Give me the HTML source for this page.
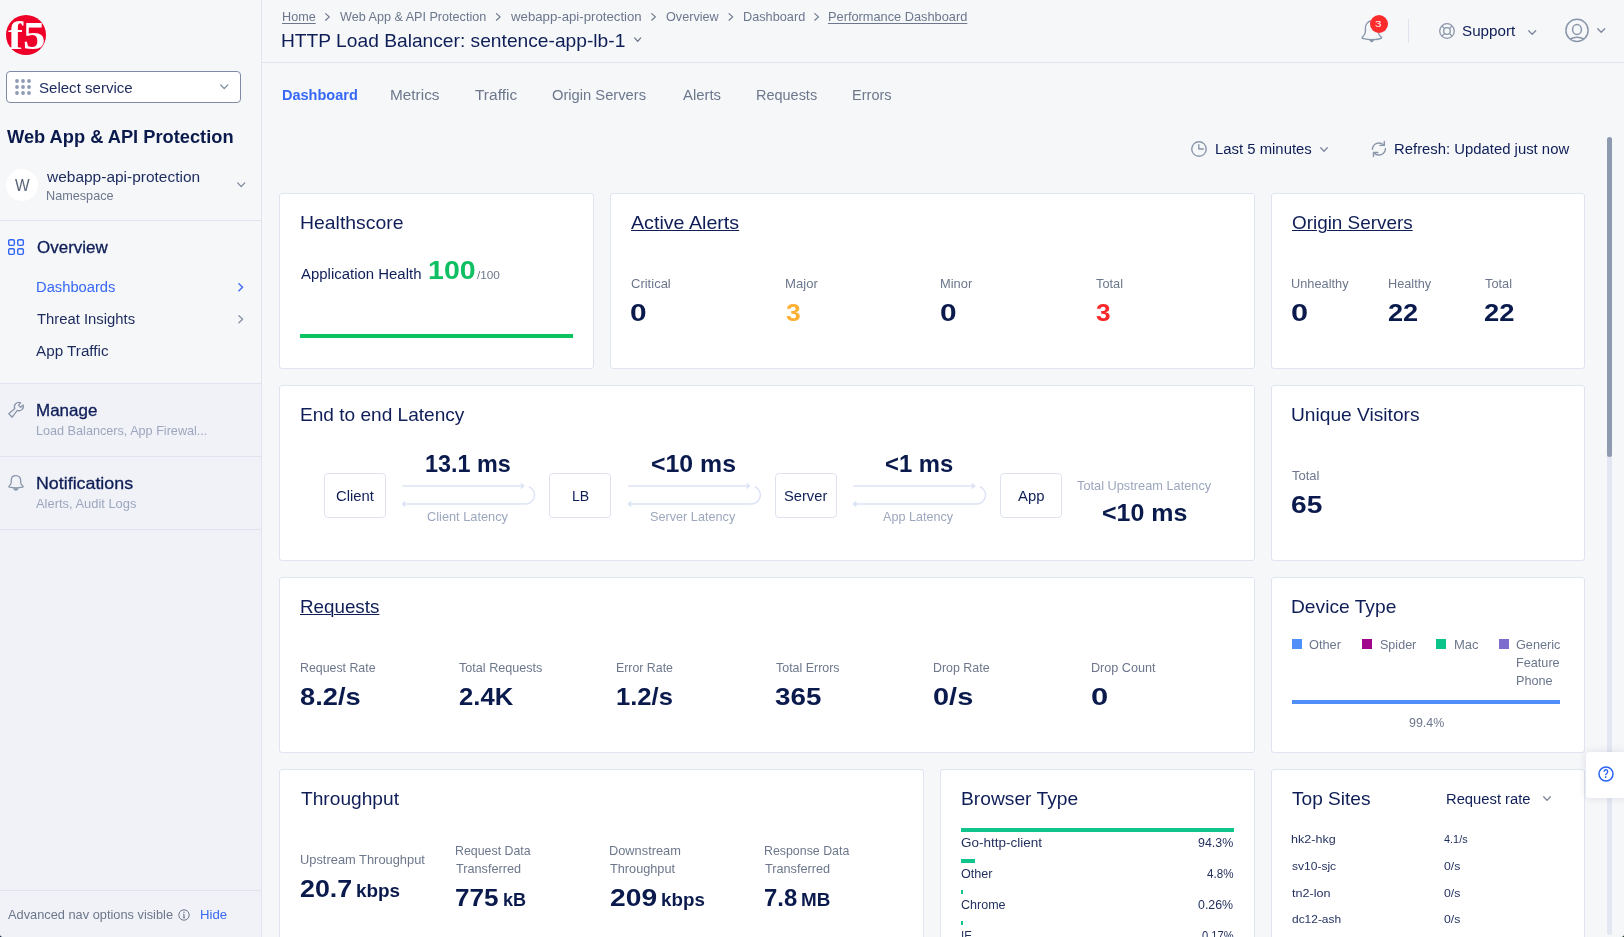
<!DOCTYPE html>
<html lang="en">
<head>
<meta charset="utf-8">
<title>HTTP Load Balancer: sentence-app-lb-1 - Performance Dashboard</title>
<style>
*{box-sizing:border-box;margin:0;padding:0}
html,body{width:1624px;height:937px;overflow:hidden;background:#f5f7f9}
body{position:relative;font-family:"Liberation Sans",sans-serif;color:#0f1e57}
.abs{position:absolute}
.t{position:absolute;white-space:nowrap;line-height:20px;display:block}
.card{position:absolute;background:#fff;border:1px solid #e0e4f0;border-radius:3px}
.hl{position:absolute;height:1px;background:#e0e4f0}
.vl{position:absolute;width:1px;background:#e0e4f0}
.nbox{position:absolute;width:62px;height:45px;top:473px;border:1px solid #dfe3f0;border-radius:4px;background:#fff}
svg{position:absolute;overflow:visible}
.bar{position:absolute;height:4px}
.sq{position:absolute;width:10px;height:10px;top:639px}
</style>
</head>
<body>
<!-- ===== sidebar ===== -->
<div class="abs" id="sb-low" style="left:0;top:384px;width:261px;height:553px;background:#f0f2f7"></div>
<div class="vl" style="left:261px;top:0;height:937px"></div>
<div class="hl" style="left:0;top:220px;width:261px"></div>
<div class="hl" style="left:0;top:383px;width:261px"></div>
<div class="hl" style="left:0;top:456px;width:261px"></div>
<div class="hl" style="left:0;top:529px;width:261px"></div>
<div class="hl" style="left:0;top:890px;width:261px"></div>
<!-- logo -->
<div class="abs" id="logo" style="left:6px;top:15px;width:40px;height:40px;border-radius:50%;background:#ee0028"></div>
<!-- select service -->
<div class="abs" style="left:6px;top:71px;width:235px;height:32px;border:1px solid #7f8ba6;border-radius:4px;background:#fff"></div>
<svg style="left:15px;top:79px" width="16" height="16" viewBox="0 0 16 16" fill="#8f9bb3"><circle cx="2" cy="2" r="1.9"/><circle cx="8" cy="2" r="1.9"/><circle cx="14" cy="2" r="1.9"/><circle cx="2" cy="8" r="1.9"/><circle cx="8" cy="8" r="1.9"/><circle cx="14" cy="8" r="1.9"/><circle cx="2" cy="14" r="1.9"/><circle cx="8" cy="14" r="1.9"/><circle cx="14" cy="14" r="1.9"/></svg>
<svg style="left:220px;top:84px" width="9" height="6" viewBox="0 0 9 6" fill="none" stroke="#7d879c" stroke-width="1.3" stroke-linecap="round" stroke-linejoin="round"><path d="M0.7 0.9 L4.2 4.6 L7.7 0.9"/></svg>
<!-- namespace -->
<div class="abs" style="left:6px;top:169px;width:32px;height:32px;border-radius:50%;background:#fff"></div>
<svg style="left:237px;top:182px" width="9" height="6" viewBox="0 0 9 6" fill="none" stroke="#7d879c" stroke-width="1.3" stroke-linecap="round" stroke-linejoin="round"><path d="M0.7 0.9 L4.2 4.6 L7.7 0.9"/></svg>
<!-- overview icon -->
<svg style="left:8px;top:239px" width="16" height="16" viewBox="0 0 16 16" fill="none" stroke="#3064f5" stroke-width="1.4"><rect x="0.7" y="0.7" width="5.65" height="5.65" rx="1.4"/><rect x="9.7" y="0.7" width="5.65" height="5.65" rx="1.4"/><rect x="0.7" y="9.7" width="5.65" height="5.65" rx="1.4"/><rect x="9.7" y="9.7" width="5.65" height="5.65" rx="1.4"/></svg>
<!-- chevrons right -->
<svg style="left:238px;top:283px" width="6" height="9" viewBox="0 0 6 9" fill="none" stroke="#3e6df5" stroke-width="1.4" stroke-linecap="round" stroke-linejoin="round"><path d="M0.9 0.8 L4.6 4.3 L0.9 7.8"/></svg>
<svg style="left:238px;top:315px" width="6" height="9" viewBox="0 0 6 9" fill="none" stroke="#8690a6" stroke-width="1.3" stroke-linecap="round" stroke-linejoin="round"><path d="M0.9 0.8 L4.6 4.3 L0.9 7.8"/></svg>
<!-- wrench -->
<svg style="left:8px;top:402px" width="16" height="16" viewBox="0 0 16 16" fill="none" stroke="#8a96aa" stroke-width="1.3" stroke-linejoin="round"><path d="M6.8 6.6 A4.3 4.3 0 0 1 12.6 0.9 L10.6 3.4 L12.6 5.4 L15.1 3.0 A4.3 4.3 0 0 1 9.2 8.3 L4.2 15.2 L0.8 11.8 Z"/></svg>
<!-- bell (sidebar) -->
<svg style="left:8px;top:475px" width="16" height="16" viewBox="0 0 16 16" fill="none" stroke="#8a96aa" stroke-width="1.3" stroke-linejoin="round"><path d="M7.9 0.65 C5.0 0.65 3.25 2.8 3.25 5.4 L3.25 7.6 C3.25 9.3 2.2 10.1 1.0 11.3 C0.6 11.7 0.8 12.0 1.4 12.1 C5.5 13.1 10.3 13.1 14.6 12.1 C15.2 12.0 15.4 11.7 15.0 11.3 C13.8 10.1 12.65 9.3 12.65 7.6 L12.65 5.4 C12.65 2.8 10.9 0.65 7.9 0.65 Z"/><path d="M5.0 13.3 L10.8 13.3 C10.3 14.9 9.3 15.8 7.9 15.8 C6.5 15.8 5.5 14.9 5.0 13.3 Z" fill="#8a96aa" stroke="none"/></svg>
<!-- info icon -->
<svg style="left:177.5px;top:908.8px" width="12" height="12" viewBox="0 0 12 12" fill="none" stroke="#6c778c" stroke-width="1"><circle cx="6" cy="6" r="5.2"/><path d="M6 5.2 L6 8.8 M4.9 8.8 L7.1 8.8 M5.1 5.2 L6 5.2" stroke-width="1.1"/><circle cx="6" cy="3.3" r="0.7" fill="#6c778c" stroke="none"/></svg>

<!-- ===== header ===== -->
<div class="hl" style="left:262px;top:62px;width:1362px"></div>
<!-- breadcrumb chevrons -->
<svg id="bcchev" style="left:0;top:0" width="1000" height="30" viewBox="0 0 1000 30" fill="none" stroke="#6c778c" stroke-width="1.2" stroke-linecap="round" stroke-linejoin="round">
<path d="M325.6 13.6 L329.3 16.9 L325.6 20.2"/>
<path d="M496.4 13.6 L500.1 16.9 L496.4 20.2"/>
<path d="M651.7 13.6 L655.4 16.9 L651.7 20.2"/>
<path d="M729 13.6 L732.7 16.9 L729 20.2"/>
<path d="M814.8 13.6 L818.5 16.9 L814.8 20.2"/>
</svg>
<!-- title chevron -->
<svg style="left:634px;top:37px" width="9" height="6" viewBox="0 0 9 6" fill="none" stroke="#6c778c" stroke-width="1.3" stroke-linecap="round" stroke-linejoin="round"><path d="M0.7 0.9 L3.7 4.4 L6.7 0.9"/></svg>
<!-- header bell -->
<svg style="left:1360.5px;top:20px" width="21.7" height="25.35" viewBox="0 0 16 16.6" preserveAspectRatio="none" fill="none" stroke="#8a96aa" stroke-width="1.35" stroke-linejoin="round"><path vector-effect="non-scaling-stroke" d="M7.9 0.65 C5.0 0.65 3.25 2.8 3.25 5.4 L3.25 7.6 C3.25 9.3 2.2 10.1 1.0 11.3 C0.6 11.7 0.8 12.0 1.4 12.1 C5.5 13.1 10.3 13.1 14.6 12.1 C15.2 12.0 15.4 11.7 15.0 11.3 C13.8 10.1 12.65 9.3 12.65 7.6 L12.65 5.4 C12.65 2.8 10.9 0.65 7.9 0.65 Z"/><path d="M6.1 13.0 L9.7 13.0 C9.4 14.1 8.8 14.6 7.9 14.6 C7.0 14.6 6.4 14.1 6.1 13.0 Z" fill="#8a96aa" stroke="none"/></svg>
<div class="abs" style="left:1369.8px;top:14.9px;width:18.2px;height:18.2px;border-radius:50%;background:#fd2c2c"></div>
<div class="vl" style="left:1408px;top:19px;height:24px;background:#dfe3ee"></div>
<!-- support icon -->
<svg style="left:1438.8px;top:22.9px" width="16" height="16" viewBox="0 0 16 16" fill="none" stroke="#8a96aa" stroke-width="1.3"><circle cx="8" cy="8" r="7.3"/><circle cx="8" cy="8" r="3.3"/><path d="M2.9 2.9 L5.6 5.6 M13.1 2.9 L10.4 5.6 M2.9 13.1 L5.6 10.4 M13.1 13.1 L10.4 10.4"/></svg>
<svg style="left:1528px;top:30px" width="9" height="6" viewBox="0 0 9 6" fill="none" stroke="#7d879c" stroke-width="1.3" stroke-linecap="round" stroke-linejoin="round"><path d="M0.7 0.7 L4.2 4.2 L7.7 0.7"/></svg>
<!-- user icon -->
<svg style="left:1565px;top:18px" width="24" height="25" viewBox="0 0 24 25" fill="none" stroke="#8a96aa" stroke-width="1.45"><circle cx="12" cy="12.4" r="11.1"/><ellipse cx="12" cy="11.5" rx="4.4" ry="5.0"/><path d="M5.0 21.0 Q12 17.3 19.0 21.0"/></svg>
<svg style="left:1597px;top:28px" width="9" height="6" viewBox="0 0 9 6" fill="none" stroke="#7d879c" stroke-width="1.3" stroke-linecap="round" stroke-linejoin="round"><path d="M0.7 0.7 L4.2 4.2 L7.7 0.7"/></svg>
<!-- clock -->
<svg style="left:1190.9px;top:140.85px" width="16" height="16" viewBox="0 0 16 16" fill="none" stroke="#8a96aa" stroke-width="1.4" stroke-linecap="round" stroke-linejoin="round"><circle cx="8" cy="8" r="7.25"/><path d="M7.8 3.6 L7.8 8.05 L12.4 8.05"/></svg>
<svg style="left:1320px;top:147px" width="9" height="6" viewBox="0 0 9 6" fill="none" stroke="#7d879c" stroke-width="1.3" stroke-linecap="round" stroke-linejoin="round"><path d="M0.7 0.7 L4.0 4.2 L7.3 0.7"/></svg>
<!-- refresh -->
<svg style="left:1371px;top:141px" width="16" height="16" viewBox="0 0 16 16" fill="none" stroke="#8a96aa" stroke-width="1.4" stroke-linecap="round" stroke-linejoin="round"><path d="M1.4 8.3 A6.6 6.6 0 0 1 12.9 4.2"/><path d="M13.3 0.5 L13.3 4.4 L8.9 4.4"/><path d="M14.4 7.7 A6.6 6.6 0 0 1 2.9 11.8"/><path d="M2.5 15.5 L2.5 11.5 L6.8 11.5"/></svg>
<!-- scrollbar -->
<div class="abs" style="left:1607px;top:137px;width:5px;height:798px;border-radius:2.5px;background:#e3e7f2"></div>
<div class="abs" style="left:1607px;top:137px;width:5px;height:320px;border-radius:2.5px;background:#8e9ab0"></div>

<!-- ===== cards ===== -->
<div class="card" style="left:279px;top:193px;width:315px;height:176px"></div>
<div class="card" style="left:610px;top:193px;width:645px;height:176px"></div>
<div class="card" style="left:1271px;top:193px;width:314px;height:176px"></div>
<div class="card" style="left:279px;top:385px;width:976px;height:176px"></div>
<div class="card" style="left:1271px;top:385px;width:314px;height:176px"></div>
<div class="card" style="left:279px;top:577px;width:976px;height:176px"></div>
<div class="card" style="left:1271px;top:577px;width:314px;height:176px"></div>
<div class="card" style="left:279px;top:769px;width:645px;height:200px"></div>
<div class="card" style="left:940px;top:769px;width:315px;height:200px"></div>
<div class="card" style="left:1271px;top:769px;width:314px;height:200px"></div>
<!-- health bar -->
<div class="bar" style="left:300px;top:334px;width:273px;background:#0cc45f"></div>
<!-- latency boxes -->
<div class="nbox" style="left:324px"></div>
<div class="nbox" style="left:549px"></div>
<div class="nbox" style="left:775px"></div>
<div class="nbox" style="left:1000px"></div>
<svg id="arrows" style="left:0;top:0" width="1100" height="560" viewBox="0 0 1100 560" fill="none" stroke="#dde4f6" stroke-width="1.5">
<g id="ar1"><path d="M402.4 486 L521 486"/><path d="M520.8 482.6 L524.8 486 L520.8 489.4 Z" fill="#dde4f6" stroke="none"/><path d="M529 486.7 A9 9 0 0 1 525.7 504 L405 504"/><path d="M405.4 500.6 L401.4 504 L405.4 507.4 Z" fill="#dde4f6" stroke="none"/></g>
<g transform="translate(225.8 0)"><path d="M402.4 486 L521 486"/><path d="M520.8 482.6 L524.8 486 L520.8 489.4 Z" fill="#dde4f6" stroke="none"/><path d="M529 486.7 A9 9 0 0 1 525.7 504 L405 504"/><path d="M405.4 500.6 L401.4 504 L405.4 507.4 Z" fill="#dde4f6" stroke="none"/></g>
<g transform="translate(451 0)"><path d="M402.4 486 L521 486"/><path d="M520.8 482.6 L524.8 486 L520.8 489.4 Z" fill="#dde4f6" stroke="none"/><path d="M529 486.7 A9 9 0 0 1 525.7 504 L405 504"/><path d="M405.4 500.6 L401.4 504 L405.4 507.4 Z" fill="#dde4f6" stroke="none"/></g>
</svg>
<!-- device type -->
<div class="sq" style="left:1292px;background:#4f8ff7"></div>
<div class="sq" style="left:1362px;background:#a0058c"></div>
<div class="sq" style="left:1436px;background:#0ac48a"></div>
<div class="sq" style="left:1499px;background:#7c6cce"></div>
<div class="bar" style="left:1292px;top:700px;width:268px;background:#4f8ff7"></div>
<!-- browser bars -->
<div class="bar" style="left:961px;top:828px;width:273px;background:#10c48c"></div>
<div class="bar" style="left:961px;top:859px;width:14px;background:#10c48c"></div>
<div class="bar" style="left:961px;top:890px;width:2px;background:#10c48c"></div>
<div class="bar" style="left:961px;top:921px;width:2px;background:#10c48c"></div>
<!-- top sites chevron -->
<svg style="left:1543px;top:796px" width="9" height="6" viewBox="0 0 9 6" fill="none" stroke="#7d879c" stroke-width="1.3" stroke-linecap="round" stroke-linejoin="round"><path d="M0.7 0.7 L4.0 4.4 L7.3 0.7"/></svg>
<!-- help button -->
<div class="abs" style="left:1586px;top:752px;width:40px;height:46px;background:#fff;border-radius:4px 0 0 4px;box-shadow:0 0 8px rgba(30,40,90,0.12)"></div>
<svg style="left:1598px;top:766px" width="16" height="16" viewBox="0 0 16 16" fill="none" stroke="#2a63f6" stroke-width="1.5"><circle cx="8" cy="8" r="7"/></svg>
<svg style="left:0;top:0" width="1624" height="937" viewBox="0 0 1624 937"><path d="M0 937 L0 934.3 A2.7 2.7 0 0 0 2.7 937 Z" fill="#0a1a38"/><path d="M1624 937 L1624 934.3 A2.7 2.7 0 0 1 1621.3 937 Z" fill="#0a200f"/></svg>
<div id="txt" style="position:absolute;left:0;top:0;width:1624px;height:937px;will-change:transform">
<span class="t" style="left:8.0px;top:26px;font-size:40.0px;font-weight:700;color:#ffffff;transform:scaleX(1.1257);transform-origin:0 0;font-family:'Liberation Serif',serif">f5</span>
<span class="t" style="left:1603.0px;top:764px;font-size:12.5px;font-weight:700;color:#2a63f6;transform:scaleX(0.7612);transform-origin:0 0;">?</span>
<span class="t" style="left:39.0px;top:78px;font-size:14.42px;font-weight:400;color:#1c2a5c;transform:scaleX(1.0447);transform-origin:0 0;">Select service</span>
<span class="t" style="left:7.0px;top:127px;font-size:18.0px;font-weight:700;color:#0a1a4c;transform:scaleX(1.0143);transform-origin:0 0;">Web App &amp; API Protection</span>
<span class="t" style="left:15.0px;top:175px;font-size:16.48px;font-weight:400;color:#5a6478;transform:scaleX(0.9401);transform-origin:0 0;">W</span>
<span class="t" style="left:47.0px;top:167px;font-size:14.42px;font-weight:400;color:#1c2a5c;transform:scaleX(1.0746);transform-origin:0 0;">webapp-api-protection</span>
<span class="t" style="left:46.0px;top:186px;font-size:12.36px;font-weight:400;color:#6c778c;transform:scaleX(1.0242);transform-origin:0 0;">Namespace</span>
<span class="t" style="left:37.0px;top:237px;font-size:16.48px;font-weight:400;color:#0f1e57;-webkit-text-stroke:0.3px currentColor;transform:scaleX(1.0314);transform-origin:0 0;">Overview</span>
<span class="t" style="left:36.0px;top:277px;font-size:14.42px;font-weight:400;color:#3668f5;transform:scaleX(1.0225);transform-origin:0 0;">Dashboards</span>
<span class="t" style="left:37.0px;top:309px;font-size:14.42px;font-weight:400;color:#1c2a5c;transform:scaleX(1.0297);transform-origin:0 0;">Threat Insights</span>
<span class="t" style="left:36.0px;top:341px;font-size:14.42px;font-weight:400;color:#1c2a5c;transform:scaleX(1.0579);transform-origin:0 0;">App Traffic</span>
<span class="t" style="left:36.0px;top:400px;font-size:16.48px;font-weight:400;color:#0f1e57;-webkit-text-stroke:0.3px currentColor;transform:scaleX(1.0307);transform-origin:0 0;">Manage</span>
<span class="t" style="left:36.0px;top:421px;font-size:12.36px;font-weight:400;color:#9ca7be;transform:scaleX(1.0224);transform-origin:0 0;">Load Balancers, App Firewal...</span>
<span class="t" style="left:36.0px;top:473px;font-size:16.48px;font-weight:400;color:#0f1e57;-webkit-text-stroke:0.3px currentColor;transform:scaleX(1.0818);transform-origin:0 0;">Notifications</span>
<span class="t" style="left:36.0px;top:494px;font-size:12.36px;font-weight:400;color:#9ca7be;transform:scaleX(1.0438);transform-origin:0 0;">Alerts, Audit Logs</span>
<span class="t" style="left:8.0px;top:905px;font-size:12.36px;font-weight:400;color:#6c778c;transform:scaleX(1.0354);transform-origin:0 0;">Advanced nav options visible</span>
<span class="t" style="left:200.0px;top:905px;font-size:12.36px;font-weight:400;color:#3668f5;transform:scaleX(1.0624);transform-origin:0 0;">Hide</span>
<span class="t" style="left:282.0px;top:7px;font-size:12.36px;font-weight:400;color:#6c778c;transform:scaleX(1.0228);transform-origin:0 0;text-decoration:underline;text-underline-offset:2px">Home</span>
<span class="t" style="left:340.0px;top:7px;font-size:12.36px;font-weight:400;color:#6c778c;transform:scaleX(1.0199);transform-origin:0 0;">Web App &amp; API Protection</span>
<span class="t" style="left:511.0px;top:7px;font-size:12.36px;font-weight:400;color:#6c778c;transform:scaleX(1.0685);transform-origin:0 0;">webapp-api-protection</span>
<span class="t" style="left:666.0px;top:7px;font-size:12.36px;font-weight:400;color:#6c778c;transform:scaleX(1.0224);transform-origin:0 0;">Overview</span>
<span class="t" style="left:743.0px;top:7px;font-size:12.36px;font-weight:400;color:#6c778c;transform:scaleX(1.0292);transform-origin:0 0;">Dashboard</span>
<span class="t" style="left:828.0px;top:7px;font-size:12.36px;font-weight:400;color:#6c778c;transform:scaleX(1.0347);transform-origin:0 0;text-decoration:underline;text-underline-offset:2px">Performance Dashboard</span>
<span class="t" style="left:281.0px;top:31px;font-size:18.54px;font-weight:400;color:#0f1e57;transform:scaleX(1.0360);transform-origin:0 0;">HTTP Load Balancer: sentence-app-lb-1</span>
<span class="t" style="left:282.0px;top:85px;font-size:14.0px;font-weight:700;color:#3668f5;transform:scaleX(1.0363);transform-origin:0 0;">Dashboard</span>
<span class="t" style="left:390.0px;top:85px;font-size:14.42px;font-weight:400;color:#6c778c;transform:scaleX(1.0660);transform-origin:0 0;">Metrics</span>
<span class="t" style="left:475.0px;top:85px;font-size:14.42px;font-weight:400;color:#6c778c;transform:scaleX(1.0737);transform-origin:0 0;">Traffic</span>
<span class="t" style="left:552.0px;top:85px;font-size:14.42px;font-weight:400;color:#6c778c;transform:scaleX(1.0218);transform-origin:0 0;">Origin Servers</span>
<span class="t" style="left:683.0px;top:85px;font-size:14.42px;font-weight:400;color:#6c778c;transform:scaleX(1.0322);transform-origin:0 0;">Alerts</span>
<span class="t" style="left:756.0px;top:85px;font-size:14.42px;font-weight:400;color:#6c778c;transform:scaleX(1.0041);transform-origin:0 0;">Requests</span>
<span class="t" style="left:852.0px;top:85px;font-size:14.42px;font-weight:400;color:#6c778c;transform:scaleX(1.0091);transform-origin:0 0;">Errors</span>
<span class="t" style="left:1375.0px;top:14px;font-size:9.79px;font-weight:400;color:#ffffff;transform:scaleX(1.1751);transform-origin:0 0;">3</span>
<span class="t" style="left:1462.0px;top:21px;font-size:14.42px;font-weight:400;color:#0f1e57;transform:scaleX(1.0559);transform-origin:0 0;">Support</span>
<span class="t" style="left:1215.0px;top:139px;font-size:14.42px;font-weight:400;color:#0f1e57;transform:scaleX(1.0326);transform-origin:0 0;">Last 5 minutes</span>
<span class="t" style="left:1394.0px;top:139px;font-size:14.42px;font-weight:400;color:#0f1e57;transform:scaleX(1.0316);transform-origin:0 0;">Refresh: Updated just now</span>
<span class="t" style="left:300.0px;top:213px;font-size:18.54px;font-weight:400;color:#0f1e57;transform:scaleX(1.0471);transform-origin:0 0;">Healthscore</span>
<span class="t" style="left:301.0px;top:264px;font-size:14.42px;font-weight:400;color:#0f1e57;transform:scaleX(1.0372);transform-origin:0 0;">Application Health</span>
<span class="t" style="left:428.0px;top:260px;font-size:25.0px;font-weight:700;color:#0fbf61;transform:scaleX(1.1418);transform-origin:0 0;">100</span>
<span class="t" style="left:477.0px;top:265px;font-size:11.33px;font-weight:400;color:#6c778c;transform:scaleX(1.0392);transform-origin:0 0;">/100</span>
<span class="t" style="left:631.0px;top:213px;font-size:18.54px;font-weight:400;color:#0f1e57;transform:scaleX(1.0609);transform-origin:0 0;text-decoration:underline;text-underline-offset:1px;text-decoration-thickness:1px">Active Alerts</span>
<span class="t" style="left:631.0px;top:274px;font-size:12.36px;font-weight:400;color:#6c778c;transform:scaleX(1.0528);transform-origin:0 0;">Critical</span>
<span class="t" style="left:630.0px;top:303px;font-size:24.0px;font-weight:700;color:#0a1a4c;transform:scaleX(1.2441);transform-origin:0 0;">0</span>
<span class="t" style="left:785.0px;top:274px;font-size:12.36px;font-weight:400;color:#6c778c;transform:scaleX(1.0608);transform-origin:0 0;">Major</span>
<span class="t" style="left:786.0px;top:303px;font-size:24.0px;font-weight:700;color:#fbb034;transform:scaleX(1.1048);transform-origin:0 0;">3</span>
<span class="t" style="left:940.0px;top:274px;font-size:12.36px;font-weight:400;color:#6c778c;transform:scaleX(1.0407);transform-origin:0 0;">Minor</span>
<span class="t" style="left:940.0px;top:303px;font-size:24.0px;font-weight:700;color:#0a1a4c;transform:scaleX(1.2420);transform-origin:0 0;">0</span>
<span class="t" style="left:1096.0px;top:274px;font-size:12.36px;font-weight:400;color:#6c778c;transform:scaleX(1.0331);transform-origin:0 0;">Total</span>
<span class="t" style="left:1096.0px;top:303px;font-size:24.0px;font-weight:700;color:#f9282b;transform:scaleX(1.0941);transform-origin:0 0;">3</span>
<span class="t" style="left:1292.0px;top:213px;font-size:18.54px;font-weight:400;color:#0f1e57;transform:scaleX(1.0189);transform-origin:0 0;text-decoration:underline;text-underline-offset:1px;text-decoration-thickness:1px">Origin Servers</span>
<span class="t" style="left:1291.0px;top:274px;font-size:12.36px;font-weight:400;color:#6c778c;transform:scaleX(1.0339);transform-origin:0 0;">Unhealthy</span>
<span class="t" style="left:1291.0px;top:303px;font-size:24.0px;font-weight:700;color:#0a1a4c;transform:scaleX(1.2798);transform-origin:0 0;">0</span>
<span class="t" style="left:1388.0px;top:274px;font-size:12.36px;font-weight:400;color:#6c778c;transform:scaleX(1.0299);transform-origin:0 0;">Healthy</span>
<span class="t" style="left:1388.0px;top:303px;font-size:24.0px;font-weight:700;color:#0a1a4c;transform:scaleX(1.1296);transform-origin:0 0;">22</span>
<span class="t" style="left:1485.0px;top:274px;font-size:12.36px;font-weight:400;color:#6c778c;transform:scaleX(1.0331);transform-origin:0 0;">Total</span>
<span class="t" style="left:1484.0px;top:303px;font-size:24.0px;font-weight:700;color:#0a1a4c;transform:scaleX(1.1399);transform-origin:0 0;">22</span>
<span class="t" style="left:300.0px;top:405px;font-size:18.54px;font-weight:400;color:#0f1e57;transform:scaleX(1.0293);transform-origin:0 0;">End to end Latency</span>
<span class="t" style="left:336.0px;top:486px;font-size:14.42px;font-weight:400;color:#0f1e57;transform:scaleX(1.0301);transform-origin:0 0;">Client</span>
<span class="t" style="left:425.0px;top:454px;font-size:24.0px;font-weight:700;color:#0a1a4c;transform:scaleX(0.9734);transform-origin:0 0;">13.1 ms</span>
<span class="t" style="left:427.0px;top:507px;font-size:12.36px;font-weight:400;color:#9ca7be;transform:scaleX(1.0329);transform-origin:0 0;">Client Latency</span>
<span class="t" style="left:572.0px;top:486px;font-size:14.42px;font-weight:400;color:#0f1e57;transform:scaleX(0.9806);transform-origin:0 0;">LB</span>
<span class="t" style="left:651.0px;top:454px;font-size:24.0px;font-weight:700;color:#0a1a4c;transform:scaleX(1.0354);transform-origin:0 0;">&lt;10 ms</span>
<span class="t" style="left:650.0px;top:507px;font-size:12.36px;font-weight:400;color:#9ca7be;transform:scaleX(1.0256);transform-origin:0 0;">Server Latency</span>
<span class="t" style="left:784.0px;top:486px;font-size:14.42px;font-weight:400;color:#0f1e57;transform:scaleX(1.0203);transform-origin:0 0;">Server</span>
<span class="t" style="left:885.0px;top:454px;font-size:24.0px;font-weight:700;color:#0a1a4c;transform:scaleX(0.9927);transform-origin:0 0;">&lt;1 ms</span>
<span class="t" style="left:883.0px;top:507px;font-size:12.36px;font-weight:400;color:#9ca7be;transform:scaleX(1.0187);transform-origin:0 0;">App Latency</span>
<span class="t" style="left:1018.0px;top:486px;font-size:14.42px;font-weight:400;color:#0f1e57;transform:scaleX(1.0289);transform-origin:0 0;">App</span>
<span class="t" style="left:1077.0px;top:476px;font-size:12.36px;font-weight:400;color:#9ca7be;transform:scaleX(1.0334);transform-origin:0 0;">Total Upstream Latency</span>
<span class="t" style="left:1102.0px;top:503px;font-size:24.0px;font-weight:700;color:#0a1a4c;transform:scaleX(1.0405);transform-origin:0 0;">&lt;10 ms</span>
<span class="t" style="left:1291.0px;top:405px;font-size:18.54px;font-weight:400;color:#0f1e57;transform:scaleX(1.0343);transform-origin:0 0;">Unique Visitors</span>
<span class="t" style="left:1292.0px;top:466px;font-size:12.36px;font-weight:400;color:#6c778c;transform:scaleX(1.0501);transform-origin:0 0;">Total</span>
<span class="t" style="left:1291.0px;top:495px;font-size:24.0px;font-weight:700;color:#0a1a4c;transform:scaleX(1.1715);transform-origin:0 0;">65</span>
<span class="t" style="left:300.0px;top:597px;font-size:18.54px;font-weight:400;color:#0f1e57;transform:scaleX(1.0136);transform-origin:0 0;text-decoration:underline;text-underline-offset:1px;text-decoration-thickness:1px">Requests</span>
<span class="t" style="left:300.0px;top:658px;font-size:12.36px;font-weight:400;color:#6c778c;transform:scaleX(0.9996);transform-origin:0 0;">Request Rate</span>
<span class="t" style="left:300.0px;top:687px;font-size:24.0px;font-weight:700;color:#0a1a4c;transform:scaleX(1.1358);transform-origin:0 0;">8.2/s</span>
<span class="t" style="left:459.0px;top:658px;font-size:12.36px;font-weight:400;color:#6c778c;transform:scaleX(1.0201);transform-origin:0 0;">Total Requests</span>
<span class="t" style="left:459.0px;top:687px;font-size:24.0px;font-weight:700;color:#0a1a4c;transform:scaleX(1.0686);transform-origin:0 0;">2.4K</span>
<span class="t" style="left:616.0px;top:658px;font-size:12.36px;font-weight:400;color:#6c778c;transform:scaleX(0.9987);transform-origin:0 0;">Error Rate</span>
<span class="t" style="left:616.0px;top:687px;font-size:24.0px;font-weight:700;color:#0a1a4c;transform:scaleX(1.0666);transform-origin:0 0;">1.2/s</span>
<span class="t" style="left:776.0px;top:658px;font-size:12.36px;font-weight:400;color:#6c778c;transform:scaleX(1.0063);transform-origin:0 0;">Total Errors</span>
<span class="t" style="left:775.0px;top:687px;font-size:24.0px;font-weight:700;color:#0a1a4c;transform:scaleX(1.1566);transform-origin:0 0;">365</span>
<span class="t" style="left:933.0px;top:658px;font-size:12.36px;font-weight:400;color:#6c778c;transform:scaleX(1.0039);transform-origin:0 0;">Drop Rate</span>
<span class="t" style="left:933.0px;top:687px;font-size:24.0px;font-weight:700;color:#0a1a4c;transform:scaleX(1.2054);transform-origin:0 0;">0/s</span>
<span class="t" style="left:1091.0px;top:658px;font-size:12.36px;font-weight:400;color:#6c778c;transform:scaleX(1.0212);transform-origin:0 0;">Drop Count</span>
<span class="t" style="left:1091.0px;top:687px;font-size:24.0px;font-weight:700;color:#0a1a4c;transform:scaleX(1.2889);transform-origin:0 0;">0</span>
<span class="t" style="left:1291.0px;top:597px;font-size:18.54px;font-weight:400;color:#0f1e57;transform:scaleX(1.0362);transform-origin:0 0;">Device Type</span>
<span class="t" style="left:1309.0px;top:635px;font-size:12.36px;font-weight:400;color:#6c778c;transform:scaleX(1.0347);transform-origin:0 0;">Other</span>
<span class="t" style="left:1380.0px;top:635px;font-size:12.36px;font-weight:400;color:#6c778c;transform:scaleX(1.0159);transform-origin:0 0;">Spider</span>
<span class="t" style="left:1454.0px;top:635px;font-size:12.36px;font-weight:400;color:#6c778c;transform:scaleX(1.0510);transform-origin:0 0;">Mac</span>
<span class="t" style="left:1516.0px;top:635px;font-size:12.36px;font-weight:400;color:#6c778c;transform:scaleX(1.0261);transform-origin:0 0;">Generic</span>
<span class="t" style="left:1516.0px;top:653px;font-size:12.36px;font-weight:400;color:#6c778c;transform:scaleX(1.0249);transform-origin:0 0;">Feature</span>
<span class="t" style="left:1516.0px;top:671px;font-size:12.36px;font-weight:400;color:#6c778c;transform:scaleX(1.0263);transform-origin:0 0;">Phone</span>
<span class="t" style="left:1409.0px;top:713px;font-size:12.36px;font-weight:400;color:#6c778c;transform:scaleX(1.0060);transform-origin:0 0;">99.4%</span>
<span class="t" style="left:301.0px;top:789px;font-size:18.54px;font-weight:400;color:#0f1e57;transform:scaleX(1.0335);transform-origin:0 0;">Throughput</span>
<span class="t" style="left:300.0px;top:850px;font-size:12.36px;font-weight:400;color:#6c778c;transform:scaleX(1.0406);transform-origin:0 0;">Upstream Throughput</span>
<span class="t" style="left:300.0px;top:879px;font-size:24.0px;font-weight:700;color:#0a1a4c;transform:scaleX(1.1167);transform-origin:0 0;">20.7</span>
<span class="t" style="left:356.0px;top:881px;font-size:18.0px;font-weight:700;color:#0a1a4c;transform:scaleX(1.0499);transform-origin:0 0;">kbps</span>
<span class="t" style="left:455.0px;top:841px;font-size:12.36px;font-weight:400;color:#6c778c;transform:scaleX(1.0013);transform-origin:0 0;">Request Data</span>
<span class="t" style="left:456.0px;top:859px;font-size:12.36px;font-weight:400;color:#6c778c;transform:scaleX(1.0246);transform-origin:0 0;">Transferred</span>
<span class="t" style="left:455.0px;top:888px;font-size:24.0px;font-weight:700;color:#0a1a4c;transform:scaleX(1.0874);transform-origin:0 0;">775</span>
<span class="t" style="left:503.0px;top:890px;font-size:18.0px;font-weight:700;color:#0a1a4c;transform:scaleX(1.0027);transform-origin:0 0;">kB</span>
<span class="t" style="left:609.0px;top:841px;font-size:12.36px;font-weight:400;color:#6c778c;transform:scaleX(1.0358);transform-origin:0 0;">Downstream</span>
<span class="t" style="left:610.0px;top:859px;font-size:12.36px;font-weight:400;color:#6c778c;transform:scaleX(1.0284);transform-origin:0 0;">Throughput</span>
<span class="t" style="left:610.0px;top:888px;font-size:24.0px;font-weight:700;color:#0a1a4c;transform:scaleX(1.1759);transform-origin:0 0;">209</span>
<span class="t" style="left:661.0px;top:890px;font-size:18.0px;font-weight:700;color:#0a1a4c;transform:scaleX(1.0434);transform-origin:0 0;">kbps</span>
<span class="t" style="left:764.0px;top:841px;font-size:12.36px;font-weight:400;color:#6c778c;transform:scaleX(1.0007);transform-origin:0 0;">Response Data</span>
<span class="t" style="left:765.0px;top:859px;font-size:12.36px;font-weight:400;color:#6c778c;transform:scaleX(1.0256);transform-origin:0 0;">Transferred</span>
<span class="t" style="left:764.0px;top:888px;font-size:24.0px;font-weight:700;color:#0a1a4c;transform:scaleX(0.9937);transform-origin:0 0;">7.8</span>
<span class="t" style="left:801.0px;top:890px;font-size:18.0px;font-weight:700;color:#0a1a4c;transform:scaleX(1.0468);transform-origin:0 0;">MB</span>
<span class="t" style="left:961.0px;top:789px;font-size:18.54px;font-weight:400;color:#0f1e57;transform:scaleX(1.0372);transform-origin:0 0;">Browser Type</span>
<span class="t" style="left:961.0px;top:833px;font-size:12.36px;font-weight:400;color:#1f2d5c;transform:scaleX(1.0906);transform-origin:0 0;">Go-http-client</span>
<span class="t" style="left:1198.0px;top:833px;font-size:12.36px;font-weight:400;color:#1f2d5c;transform:scaleX(1.0060);transform-origin:0 0;">94.3%</span>
<span class="t" style="left:961.0px;top:864px;font-size:12.36px;font-weight:400;color:#1f2d5c;transform:scaleX(1.0213);transform-origin:0 0;">Other</span>
<span class="t" style="left:1207.0px;top:864px;font-size:12.36px;font-weight:400;color:#1f2d5c;transform:scaleX(0.9393);transform-origin:0 0;">4.8%</span>
<span class="t" style="left:961.0px;top:895px;font-size:12.36px;font-weight:400;color:#1f2d5c;transform:scaleX(1.0129);transform-origin:0 0;">Chrome</span>
<span class="t" style="left:1198.0px;top:895px;font-size:12.36px;font-weight:400;color:#1f2d5c;transform:scaleX(1.0021);transform-origin:0 0;">0.26%</span>
<span class="t" style="left:961.0px;top:926px;font-size:12.36px;font-weight:400;color:#1f2d5c;transform:scaleX(0.9406);transform-origin:0 0;">IE</span>
<span class="t" style="left:1202.0px;top:926px;font-size:12.36px;font-weight:400;color:#1f2d5c;transform:scaleX(0.9007);transform-origin:0 0;">0.17%</span>
<span class="t" style="left:1292.0px;top:789px;font-size:18.54px;font-weight:400;color:#0f1e57;transform:scaleX(1.0301);transform-origin:0 0;">Top Sites</span>
<span class="t" style="left:1446.0px;top:789px;font-size:14.42px;font-weight:400;color:#0f1e57;transform:scaleX(1.0247);transform-origin:0 0;">Request rate</span>
<span class="t" style="left:1291.0px;top:829px;font-size:11.33px;font-weight:400;color:#1f2d5c;transform:scaleX(1.1086);transform-origin:0 0;">hk2-hkg</span>
<span class="t" style="left:1444.0px;top:829px;font-size:11.33px;font-weight:400;color:#1f2d5c;transform:scaleX(0.9618);transform-origin:0 0;">4.1/s</span>
<span class="t" style="left:1292.0px;top:856px;font-size:11.33px;font-weight:400;color:#1f2d5c;transform:scaleX(1.0611);transform-origin:0 0;">sv10-sjc</span>
<span class="t" style="left:1444.0px;top:856px;font-size:11.33px;font-weight:400;color:#1f2d5c;transform:scaleX(1.0815);transform-origin:0 0;">0/s</span>
<span class="t" style="left:1292.0px;top:883px;font-size:11.33px;font-weight:400;color:#1f2d5c;transform:scaleX(1.1110);transform-origin:0 0;">tn2-lon</span>
<span class="t" style="left:1444.0px;top:883px;font-size:11.33px;font-weight:400;color:#1f2d5c;transform:scaleX(1.0815);transform-origin:0 0;">0/s</span>
<span class="t" style="left:1292.0px;top:909px;font-size:11.33px;font-weight:400;color:#1f2d5c;transform:scaleX(1.0541);transform-origin:0 0;">dc12-ash</span>
<span class="t" style="left:1444.0px;top:909px;font-size:11.33px;font-weight:400;color:#1f2d5c;transform:scaleX(1.0815);transform-origin:0 0;">0/s</span>
</div>
</body>
</html>
